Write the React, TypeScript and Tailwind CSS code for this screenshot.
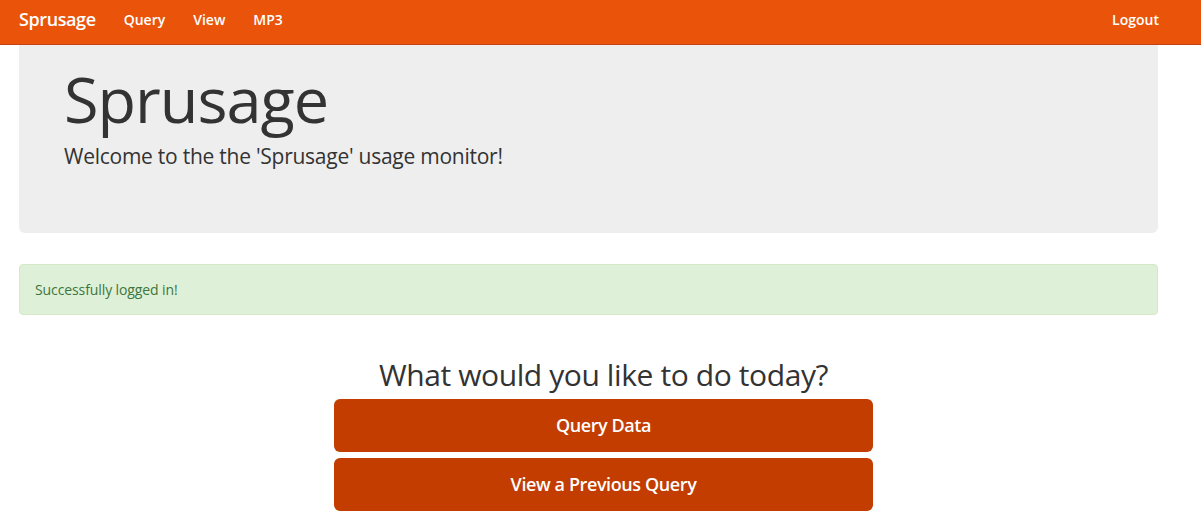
import React from "react";

const navLinks = ["Query", "View", "MP3"];

const App: React.FC = () => {
  return (
    <div
      className="min-h-screen bg-white text-[#333333]"
      style={{ fontFamily: "'Open Sans', 'Noto Sans', sans-serif" }}
    >
      {/* Navbar */}
      <nav className="h-[45px] bg-[#ea540a] border-b border-[#c34113] flex items-center pb-[5px] text-white">
        <a className="ml-[19px] text-[18px] font-semibold tracking-[-0.4px]">Sprusage</a>
        <div className="flex items-center gap-[28px] ml-[28px] text-[14px] font-semibold">
          {navLinks.map((link) => (
            <a key={link}>{link}</a>
          ))}
        </div>
        <a className="ml-auto mr-[42px] text-[14px] font-semibold">Logout</a>
      </nav>

      <div className="ml-[19px] w-[1139px]">
        {/* Jumbotron */}
        <div className="h-[188px] bg-[#eeeeee] rounded-b-[6px] px-[45px] pt-[19px]">
          <h1 className="text-[63px] leading-[1.1] tracking-[-1px]">Sprusage</h1>
          <p className="mt-[8px] text-[21px] tracking-[-0.25px]">
            Welcome to the the 'Sprusage' usage monitor!
          </p>
        </div>

        {/* Alert */}
        <div className="mt-[31px] h-[51px] bg-[#dff0d8] border border-[#d6e9c6] rounded-[4px] px-[15px] flex items-center text-[#3c763d] text-[14px] tracking-[-0.1px]">
          Successfully logged in!
        </div>

        {/* Actions */}
        <div className="mt-[43px] ml-[315px] w-[539px] flex flex-col items-center">
          <h2 className="text-[30px] leading-[1.1] tracking-[-0.4px] whitespace-nowrap">
            What would you like to do today?
          </h2>
          <div className="mt-[8px] w-full flex flex-col gap-[6px]">
            <button className="h-[53px] w-full rounded-[6px] bg-[#c33c00] text-white text-[18px] font-semibold tracking-[-0.4px]">
              Query Data
            </button>
            <button className="h-[53px] w-full rounded-[6px] bg-[#c33c00] text-white text-[18px] font-semibold tracking-[-0.4px]">
              View a Previous Query
            </button>
          </div>
        </div>
      </div>
    </div>
  );
};

export default App;
